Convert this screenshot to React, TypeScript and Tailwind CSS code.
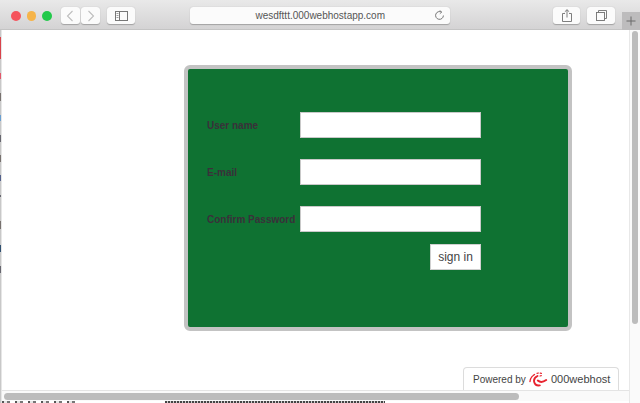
const sans = "font-['Liberation_Sans',Arial,sans-serif]";

function ToolButton({ className, children }: { className: string; children: React.ReactNode }) {
  return (
    <div className={`flex h-[17px] items-center justify-center rounded-[3px] bg-[#fbfbfb] shadow-[0_0.5px_1px_rgba(0,0,0,0.25)] ${className}`}>
      {children}
    </div>
  );
}

function Toolbar() {
  return (
    <div className="flex h-[30px] shrink-0 items-start border-b border-[#c4c4c4] bg-gradient-to-b from-[#e9e9e9] to-[#d4d3d4] pt-[7px]">
      <div className="ml-[11px] mt-[4px] flex gap-[6px]">
        <span className="h-[9.5px] w-[9.5px] rounded-full bg-[#f5535c]" />
        <span className="h-[9.5px] w-[9.5px] rounded-full bg-[#f6b44a]" />
        <span className="h-[9.5px] w-[9.5px] rounded-full bg-[#22c94a]" />
      </div>
      <ToolButton className="ml-[9px] w-[20px]">
        <svg width="8" height="12" viewBox="0 0 8 12" fill="none" stroke="#bdbdbd" strokeWidth="1.1">
          <path d="M6.5 1 1.5 6l5 5" />
        </svg>
      </ToolButton>
      <ToolButton className="ml-px w-[19px]">
        <svg width="8" height="12" viewBox="0 0 8 12" fill="none" stroke="#bdbdbd" strokeWidth="1.1">
          <path d="M1.5 1l5 5-5 5" />
        </svg>
      </ToolButton>
      <ToolButton className="ml-[7px] w-[28px]">
        <svg width="13" height="10" viewBox="0 0 13 10" fill="none" stroke="#777">
          <rect x="0.5" y="0.5" width="12" height="9" />
          <path d="M4.5 0.5v9" />
          <path d="M1.5 2.5h2M1.5 4.5h2M1.5 6.5h2" strokeWidth="0.7" />
        </svg>
      </ToolButton>
      <ToolButton className={`relative ml-[55px] w-[260px] text-[10px] text-[#555] ${sans}`}>
        wesdfttt.000webhostapp.com
        <svg className="absolute right-[5px] top-[3px]" width="11" height="11" viewBox="0 0 11 11" fill="none" stroke="#777">
          <path d="M7.5 2.1A3.9 3.9 0 1 0 9.4 5.5" />
          <path d="M5.6 0.4 7.8 2.1 5.8 3.8" strokeWidth="0.8" />
        </svg>
      </ToolButton>
      <ToolButton className="ml-[103px] w-[27px]">
        <svg width="10" height="13" viewBox="0 0 10 13" fill="none" stroke="#6f6f6f" strokeWidth="0.9">
          <path d="M3 4.5H0.5v8h9v-8H7M5 8.5V0.8M2.8 2.8 5 0.7l2.2 2.1" />
        </svg>
      </ToolButton>
      <ToolButton className="ml-[7px] w-[28px]">
        <svg width="11" height="11" viewBox="0 0 11 11" fill="none" stroke="#6f6f6f" strokeWidth="0.9">
          <rect x="0.5" y="2.5" width="8" height="8" />
          <path d="M2.5 2.5v-2h8v8h-2" />
        </svg>
      </ToolButton>
      <div className="ml-[7px] mt-[4.5px] flex h-[18px] w-[18px] items-center justify-center bg-[#bdbcbd]">
        <svg width="10" height="10" viewBox="0 0 10 10" stroke="#6a6a6a">
          <path d="M5 0.5v9M0.5 5h9" />
        </svg>
      </div>
    </div>
  );
}

function Field({ label }: { label: string }) {
  return (
    <div className="flex h-[26px] items-center">
      <label className={`w-[93px] whitespace-nowrap text-[10px] font-bold text-[#3a303a] ${sans}`}>{label}</label>
      <input className="h-[26px] w-[181px] border border-[#c9c9c9] bg-white" />
    </div>
  );
}

function Logo() {
  return (
    <svg width="19" height="15" viewBox="0 0 19 15" fill="none" stroke="#e8232f" strokeLinecap="round">
      <path d="M5.5 2.5C3 4 1.2 6.5 1 9.5" strokeWidth="1.4" strokeDasharray="1.6 1" />
      <path d="M8.5 4C6 5.2 4.6 7.5 5.2 10c0.6 2.4 3 3.8 5.6 3.4" strokeWidth="1.9" />
      <path d="M8.8 8.6c2.2 1.8 5.4 1.6 8.4-0.6" strokeWidth="2" />
      <path d="M8 1.4l1.4-0.4M11.2 1.2l1.2 0.2M11 4l1.3-0.3" strokeWidth="1.2" />
    </svg>
  );
}

export default function App() {
  return (
    <div className="flex h-[403px] w-[640px] flex-col overflow-hidden bg-white">
      <Toolbar />
      <div className="relative flex min-h-0 flex-1">
        <div className="flex w-[2px] shrink-0 flex-col border-r border-[#e6e6e6] bg-[#c8c8c8]">
          <div className="mt-[7px] h-[22px] bg-[#d8434b]" />
          <div className="mt-[14px] h-[6px] bg-[#e2586a]" />
          <div className="mt-[14px] h-[8px] bg-[#77716e]" />
          <div className="mt-[14px] h-[6px] bg-[#6a9fd0]" />
          <div className="mt-[14px] h-[7px] bg-[#66666f]" />
          <div className="mt-[13px] h-[7px] bg-[#77716e]" />
          <div className="mt-[13px] h-[6px] bg-[#53608a]" />
          <div className="mt-[14px] h-[2px] bg-[#66666f]" />
          <div className="mt-[24px] h-[8px] bg-[#77716e]" />
          <div className="mt-[16px] h-[7px] bg-[#2f4f70]" />
          <div className="mt-[14px] h-[7px] bg-[#66666f]" />
        </div>
        <div className="flex min-w-0 flex-1 flex-col">
          <div className="min-h-0 flex-1 pl-[182px] pt-[35px]">
            <div className="box-content h-[258px] w-[380px] rounded-[6px] border-[4px] border-[#c3c3c3] bg-[#0f7232]">
              <div className="flex flex-col gap-[21px] pl-[19px] pt-[43px]">
                <Field label="User name" />
                <Field label="E-mail" />
                <Field label="Confirm Password" />
              </div>
              <div className="flex justify-end pr-[87px] pt-[12px]">
                <button className={`h-[26px] w-[51px] border border-[#d0d0d0] bg-white text-[12px] text-[#444] ${sans}`}>
                  sign in
                </button>
              </div>
            </div>
          </div>
          <div className="flex h-[11px] shrink-0 items-center border-t border-[#e4e4e4] bg-[#fafafa] pl-[2px]">
            <div className="h-[7px] w-[515px] rounded-full bg-[#bcbcbc]" />
          </div>
          <div className="flex h-[2px] shrink-0 bg-white">
            <div className="w-[78px] bg-[repeating-linear-gradient(90deg,#555_0_2px,#e5e5e5_2px_5px,#777_5px_8px,#fff_8px_13px)]" />
            <div className="ml-[85px] w-[220px] bg-[repeating-linear-gradient(90deg,#444_0_2px,#ccc_2px_3px)]" />
          </div>
        </div>
        <div className="flex w-[11px] shrink-0 justify-center border-l border-[#e8e8e8] bg-[#fafafa] pt-[1px]">
          <div className="h-[293px] w-[6px] rounded-full bg-[#bcbcbc]" />
        </div>
        <div className={`absolute bottom-[13px] left-[463px] flex h-[23px] w-[156px] items-center whitespace-nowrap rounded-t-[4px] border border-b-0 border-[#dcdcdc] bg-white pl-[9px] text-[#444] ${sans}`}>
          <span className="w-[56px] text-[10px]">Powered by</span>
          <span className="flex"><Logo /></span>
          <span className="ml-[3px] text-[11px]">000webhost</span>
        </div>
      </div>
    </div>
  );
}
